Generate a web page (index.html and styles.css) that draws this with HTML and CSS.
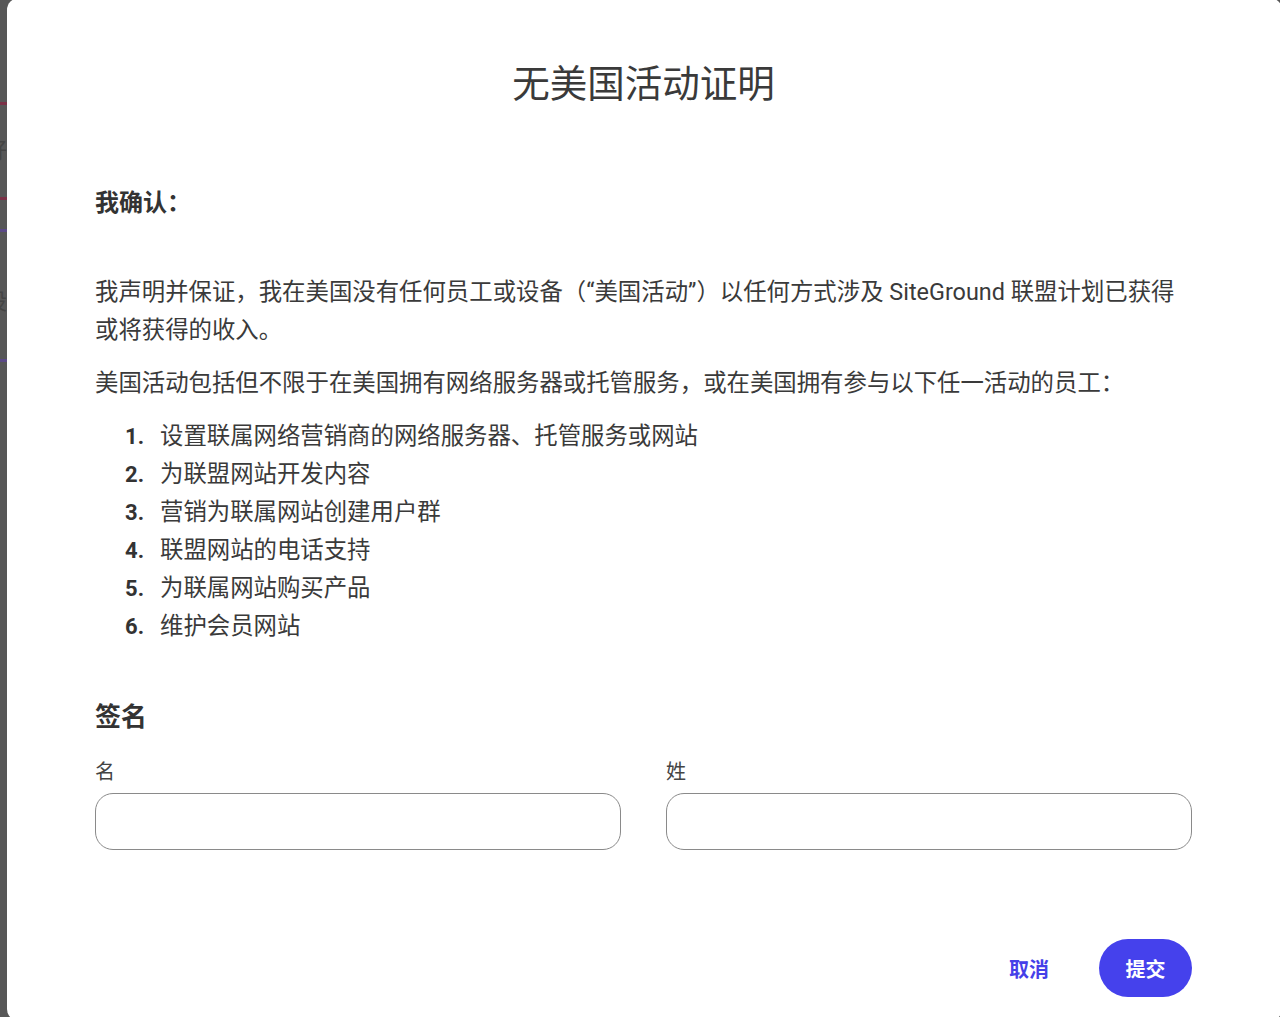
FILE: index.html
```html
<!DOCTYPE html>
<html lang="zh-CN">
<head>
    <meta charset="UTF-8">
    <meta name="viewport" content="width=device-width, initial-scale=1.0">
    <title>无美国活动证明</title>
    <link rel="stylesheet" href="styles.css">
</head>
<body>
    <div class="backdrop">
        <div class="bg-row bg-red"></div>
        <div class="bg-text">好</div>
        <div class="bg-row bg-red2"></div>
        <div class="bg-row bg-purple"></div>
        <div class="bg-text bg-text2">设</div>
        <div class="bg-row bg-purple2"></div>
    </div>

    <div class="modal">
        <h1 class="modal-title">无美国活动证明</h1>

        <h3 class="confirm-title">我确认：</h3>
        <p class="text">我声明并保证，我在美国没有任何员工或设备（“美国活动”）以任何方式涉及 SiteGround 联盟计划已获得或将获得的收入。</p>
        <p class="text">美国活动包括但不限于在美国拥有网络服务器或托管服务，或在美国拥有参与以下任一活动的员工：</p>
        <ol class="activity-list">
            <li>设置联属网络营销商的网络服务器、托管服务或网站</li>
            <li>为联盟网站开发内容</li>
            <li>营销为联属网站创建用户群</li>
            <li>联盟网站的电话支持</li>
            <li>为联属网站购买产品</li>
            <li>维护会员网站</li>
        </ol>

        <h2 class="sign-title">签名</h2>
        <div class="sign-fields">
            <label class="field">
                <span class="field-label">名</span>
                <input type="text" class="field-input">
            </label>
            <label class="field">
                <span class="field-label">姓</span>
                <input type="text" class="field-input">
            </label>
        </div>

        <div class="modal-actions">
            <button class="btn-cancel">取消</button>
            <button class="btn-submit">提交</button>
        </div>
    </div>
</body>
</html>
```

FILE: styles.css
```css
body {
    margin: 0;
    padding: 0;
    background: #575757;
    font-family: Roboto, "Noto Sans CJK SC", sans-serif;
    color: #333;
    overflow: hidden;
    height: 1017px;
}
.backdrop {
    padding-top: 102px;
}
.bg-row {
    height: 3px;
    width: 7px;
}
.bg-red { background: #7b3147; }
.bg-red2 { background: #7b3147; }
.bg-purple { background: #5b4a86; margin-top: 29px; }
.bg-purple2 { background: #5b4a86; margin-top: 16px; }
.bg-text {
    height: 92px;
    line-height: 92px;
    font-size: 22px;
    color: #444;
    margin-left: -15px;
}
.bg-text2 {
    height: 111px;
    line-height: 140px;
}
.modal {
    position: fixed;
    left: 7px;
    top: -2px;
    right: -2px;
    bottom: -4px;
    background: white;
    border-radius: 12px;
    padding: 0 90px 0 88px;
    box-sizing: border-box;
}
.modal-title {
    margin: 61px 0 0;
    font-size: 37.5px;
    line-height: 50px;
    font-weight: 400;
    text-align: center;
    color: #3a3a3a;
}
.confirm-title {
    margin: 79px 0 0;
    font-size: 24px;
    line-height: 30px;
    font-weight: 700;
    color: #333;
}
.text {
    margin: 55px 0 0;
    font-size: 23.4px;
    line-height: 38px;
    color: #3a3a3a;
}
.text + .text {
    margin-top: 15px;
}
.activity-list {
    margin: 15px 0 0;
    padding-left: 30px;
    list-style: none;
    counter-reset: item;
    font-size: 23.4px;
    line-height: 38px;
    color: #3a3a3a;
}
.activity-list li {
    counter-increment: item;
    height: 38px;
    overflow: hidden;
}
.activity-list li::before {
    content: counter(item) ".";
    display: inline-block;
    width: 35px;
    line-height: 38px;
    font-family: Roboto, sans-serif;
    font-size: 22px;
    font-weight: 700;
    color: #333;
}
.sign-title {
    margin: 55px 0 0;
    font-size: 26px;
    line-height: 34px;
    font-weight: 700;
    color: #333;
}
.sign-fields {
    display: grid;
    grid-template-columns: 1fr 1fr;
    gap: 45px;
    margin-top: 24px;
}
.field {
    display: flex;
    flex-direction: column;
    gap: 7px;
}
.field-label {
    font-size: 20px;
    line-height: 28px;
    color: #444;
}
.field-input {
    height: 57px;
    box-sizing: border-box;
    border: 1px solid #8a8a8a;
    border-radius: 18px;
    padding: 0 16px;
    font-size: 20px;
    background: white;
}
.modal-actions {
    display: flex;
    justify-content: flex-end;
    align-items: center;
    gap: 26px;
    margin-top: 89px;
}
.btn-cancel, .btn-submit {
    font-family: Roboto, "Noto Sans CJK SC", sans-serif;
    font-size: 20px;
    font-weight: 700;
    border: none;
    cursor: pointer;
}
.btn-cancel {
    background: none;
    color: #4540e8;
    padding: 0 24px;
    height: 58px;
}
.btn-submit {
    background: #4541ec;
    color: white;
    height: 58px;
    width: 93px;
    border-radius: 29px;
}
```
